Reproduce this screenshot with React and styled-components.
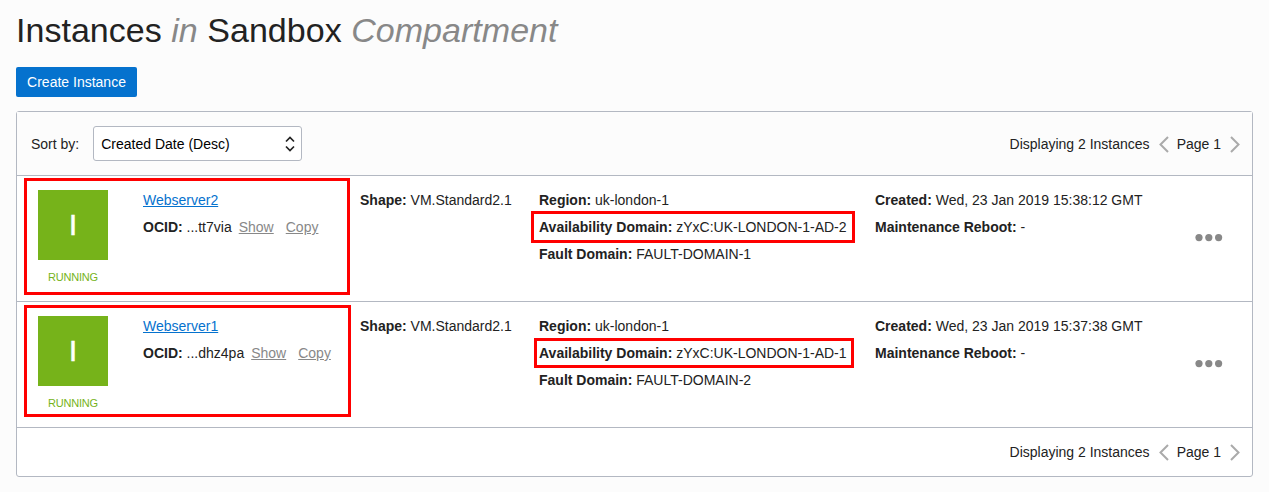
import React from "react";
import styled, { createGlobalStyle } from "styled-components";

const GlobalStyle = createGlobalStyle`
  * { box-sizing: border-box; }
  body {
    margin: 0;
    background: #fcfcfc;
    color: #222;
    font-family: "Liberation Sans", Arial, sans-serif;
    font-size: 14px;
    line-height: 27px;
  }
`;

const Page = styled.main`
  height: 492px;
  padding: 10px 16px 0;
`;

const Title = styled.h1`
  margin: 0;
  height: 57px;
  font-size: 34px;
  font-weight: 400;
  line-height: 40px;
  letter-spacing: 0.03px;
  white-space: nowrap;

  em { color: #888; }
`;

const CreateButton = styled.button`
  display: block;
  width: 121px;
  height: 30px;
  padding: 0;
  border: 0;
  border-radius: 2px;
  background: #0572ce;
  color: #fff;
  font: inherit;
  line-height: 30px;
`;

const Panel = styled.section`
  margin-top: 14px;
  border: 1px solid #b3b8c2;
  border-radius: 3px;
  background: #fff;
`;

const Toolbar = styled.header`
  display: flex;
  align-items: center;
  justify-content: space-between;
  height: 64px;
  padding: 0 12px 0 14px;
  border-bottom: 1px solid #b3b8c2;
  background: #fcfcfc;
  line-height: 28px;
`;

const Footer = styled.footer`
  display: flex;
  align-items: center;
  justify-content: flex-end;
  height: 48px;
  padding-right: 12px;
`;

const SortGroup = styled.div`
  display: flex;
  align-items: center;
  gap: 14px;
`;

const SelectBox = styled.div`
  display: flex;
  align-items: center;
  justify-content: space-between;
  width: 209px;
  height: 35px;
  padding: 1px 6px 0 7px;
  border: 1px solid #b3b8c2;
  border-radius: 3px;
  background: #fff;
  color: #000;

  svg { margin-top: -1px; }
`;

const PagerBox = styled.div`
  display: flex;
  align-items: center;
  white-space: nowrap;

  svg { display: block; margin-top: 1px; }
`;

const PageLabel = styled.span`
  margin: 0 9px 0 8px;
`;

const Count = styled.span`
  margin-right: 9px;
`;

const Row = styled.article`
  position: relative;
  display: grid;
  grid-template-columns: 105px 217px 179px 336px 1fr 57px;
  height: 126px;
  padding: 11px 0 0 21px;
  border-bottom: 1px solid #b3b8c2;
  white-space: nowrap;
`;

const Status = styled.div`
  width: 70px;
  padding-top: 3px;
  color: #76b31a;
  font-size: 11px;
  line-height: 34px;
  text-align: center;
  letter-spacing: -0.2px;
`;

const Tile = styled.div`
  height: 70px;
  background: #76b31a;
  color: #fff;
  font-size: 29px;
  line-height: 70px;
  -webkit-text-stroke: 0.6px #fff;
`;

const Link = styled.a`
  color: ${(p) => (p.$muted ? "#888" : "#0572ce")};
  text-decoration: underline;
  margin-left: ${(p) => p.$gap || 0}px;
`;

const Actions = styled.div`
  display: flex;
  align-items: flex-start;
  padding-top: 47px;
`;

const Highlight = styled.div`
  position: absolute;
  left: ${(p) => p.$x}px;
  top: ${(p) => p.$y}px;
  width: ${(p) => p.$w}px;
  height: ${(p) => p.$h}px;
  border: 3px solid #f00;
  pointer-events: none;
`;

const Chevron = ({ right }) => (
  <svg width="10" height="17" viewBox="0 0 10 17" fill="none" stroke="#aaa" strokeWidth="2">
    <path d={right ? "M1 1L8.5 8.5L1 16" : "M9 1L1.5 8.5L9 16"} />
  </svg>
);

const SortArrows = () => (
  <svg width="10" height="16" viewBox="0 0 10 16" fill="none" stroke="#222" strokeWidth="1.7">
    <path d="M1 5.5L5 1.5L9 5.5M1 10.5L5 14.5L9 10.5" />
  </svg>
);

const Dots = () => (
  <svg width="28" height="8" viewBox="0 0 28 8" fill="#888">
    <circle cx="4" cy="3.6" r="3.6" />
    <circle cx="13.8" cy="3.6" r="3.6" />
    <circle cx="23.6" cy="3.6" r="3.6" />
  </svg>
);

const Pager = () => (
  <PagerBox>
    <Count>Displaying 2 Instances</Count>
    <Chevron />
    <PageLabel>Page 1</PageLabel>
    <Chevron right />
  </PagerBox>
);

const Field = ({ label, children }) => (
  <div>
    <b>{label}:</b> {children}
  </div>
);

const instances = [
  {
    name: "Webserver2",
    ocid: "...tt7via",
    domain: "zYxC:UK-LONDON-1-AD-2",
    fault: "FAULT-DOMAIN-1",
    created: "Wed, 23 Jan 2019 15:38:12 GMT",
    marks: [
      { x: 7, y: 2, w: 326, h: 117 },
      { x: 514, y: 35, w: 324, h: 32 },
    ],
  },
  {
    name: "Webserver1",
    ocid: "...dhz4pa",
    domain: "zYxC:UK-LONDON-1-AD-1",
    fault: "FAULT-DOMAIN-2",
    created: "Wed, 23 Jan 2019 15:37:38 GMT",
    marks: [
      { x: 7, y: 3, w: 327, h: 112 },
      { x: 517, y: 36, w: 320, h: 30 },
    ],
  },
];

const InstanceRow = ({ item }) => (
  <Row>
    <Status>
      <Tile>I</Tile>
      RUNNING
    </Status>
    <div>
      <div><Link>{item.name}</Link></div>
      <Field label="OCID">
        {item.ocid}
        <Link $muted $gap={7}>Show</Link>
        <Link $muted $gap={12}>Copy</Link>
      </Field>
    </div>
    <div>
      <Field label="Shape">VM.Standard2.1</Field>
    </div>
    <div>
      <Field label="Region">uk-london-1</Field>
      <Field label="Availability Domain">{item.domain}</Field>
      <Field label="Fault Domain">{item.fault}</Field>
    </div>
    <div>
      <Field label="Created">{item.created}</Field>
      <Field label="Maintenance Reboot">-</Field>
    </div>
    <Actions><Dots /></Actions>
    {item.marks.map((m) => (
      <Highlight key={m.x} $x={m.x} $y={m.y} $w={m.w} $h={m.h} />
    ))}
  </Row>
);

export default function App() {
  return (
    <Page>
      <GlobalStyle />
      <Title>
        Instances <em>in</em> Sandbox <em>Compartment</em>
      </Title>
      <CreateButton>Create Instance</CreateButton>
      <Panel>
        <Toolbar>
          <SortGroup>
            <span>Sort by:</span>
            <SelectBox>
              Created Date (Desc)
              <SortArrows />
            </SelectBox>
          </SortGroup>
          <Pager />
        </Toolbar>
        {instances.map((item) => (
          <InstanceRow key={item.name} item={item} />
        ))}
        <Footer>
          <Pager />
        </Footer>
      </Panel>
    </Page>
  );
}
